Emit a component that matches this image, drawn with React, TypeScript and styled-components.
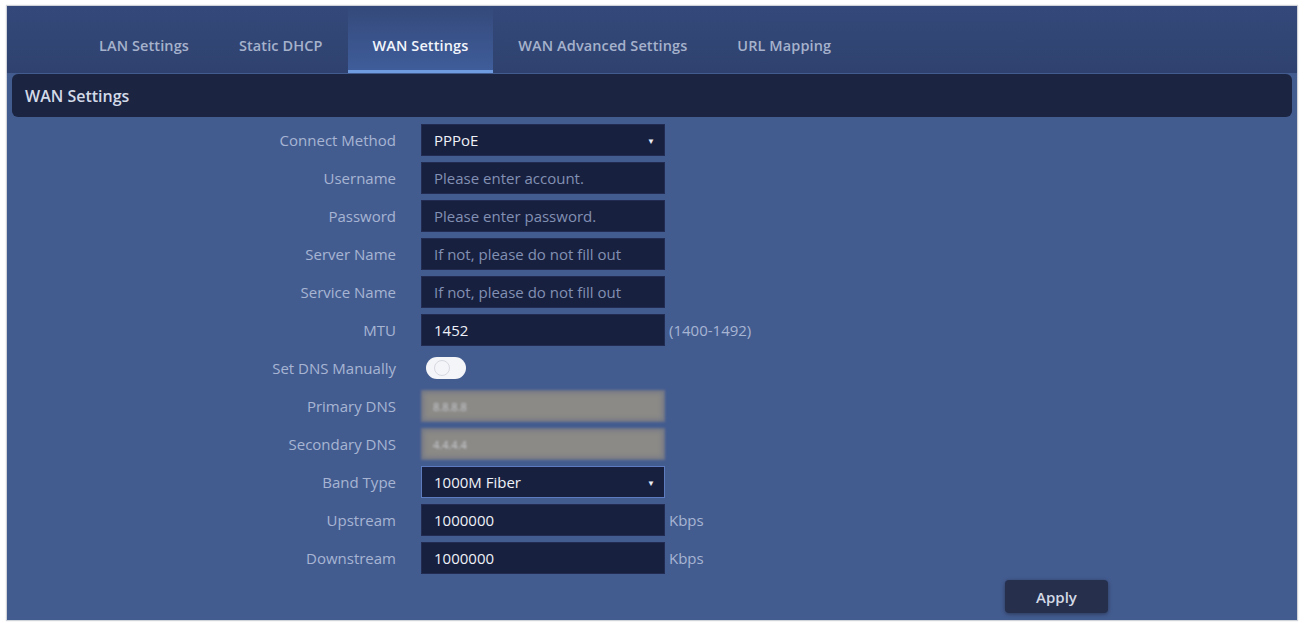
import styled, { createGlobalStyle } from 'styled-components';

const GlobalStyle = createGlobalStyle`
  html, body {
    margin: 0;
    padding: 0;
    background: #ffffff;
  }
  body {
    font-family: "Open Sans", "Noto Sans", sans-serif;
  }
`;

type Field = {
  label: string;
  kind: 'select' | 'input' | 'toggle' | 'disabled';
  value?: string;
  placeholder?: string;
  unit?: string;
  outlined?: boolean;
};

const tabs = ['LAN Settings', 'Static DHCP', 'WAN Settings', 'WAN Advanced Settings', 'URL Mapping'];

const fields: Field[] = [
  { label: 'Connect Method', kind: 'select', value: 'PPPoE' },
  { label: 'Username', kind: 'input', placeholder: 'Please enter account.' },
  { label: 'Password', kind: 'input', placeholder: 'Please enter password.' },
  { label: 'Server Name', kind: 'input', placeholder: 'If not, please do not fill out' },
  { label: 'Service Name', kind: 'input', placeholder: 'If not, please do not fill out' },
  { label: 'MTU', kind: 'input', value: '1452', unit: '(1400-1492)' },
  { label: 'Set DNS Manually', kind: 'toggle' },
  { label: 'Primary DNS', kind: 'disabled', value: '8.8.8.8' },
  { label: 'Secondary DNS', kind: 'disabled', value: '4.4.4.4' },
  { label: 'Band Type', kind: 'select', value: '1000M Fiber', outlined: true },
  { label: 'Upstream', kind: 'input', value: '1000000', unit: 'Kbps' },
  { label: 'Downstream', kind: 'input', value: '1000000', unit: 'Kbps' },
];

const App = () => {
  return (
    <Page>
      <GlobalStyle />
      <Frame>
        <TabBar>
          {tabs.map((t) => (
            <Tab key={t} active={t === 'WAN Settings'}>
              {t}
            </Tab>
          ))}
        </TabBar>
        <Header>WAN Settings</Header>
        <Form>
          {fields.map((f) => (
            <Row key={f.label}>
              <Label>{f.label}</Label>
              {f.kind === 'select' && (
                <Box outlined={f.outlined}>
                  <Value>{f.value}</Value>
                  <Caret>▼</Caret>
                </Box>
              )}
              {f.kind === 'input' && (
                <Box>
                  {f.value ? <Value>{f.value}</Value> : <Placeholder>{f.placeholder}</Placeholder>}
                </Box>
              )}
              {f.kind === 'toggle' && (
                <ToggleCell>
                  <Toggle>
                    <Knob />
                  </Toggle>
                </ToggleCell>
              )}
              {f.kind === 'disabled' && (
                <DisabledBox>
                  <DisabledText>{f.value}</DisabledText>
                </DisabledBox>
              )}
              <Unit>{f.unit}</Unit>
            </Row>
          ))}
        </Form>
        <Footer>
          <ApplyButton>Apply</ApplyButton>
        </Footer>
      </Frame>
    </Page>
  );
};

export default App;

const Page = styled.div`
  width: 1304px;
  height: 623px;
  padding: 6px 7px 3px 7px;
  box-sizing: border-box;
  background: #ffffff;
`;

const Frame = styled.div`
  height: 100%;
  display: flex;
  flex-direction: column;
  background: #435c90;
  box-shadow: 0 0 1px 1px rgba(120, 130, 150, 0.35);
`;

const TabBar = styled.div`
  display: flex;
  align-items: stretch;
  height: 67px;
  padding-left: 67px;
  background: linear-gradient(#34497a, #2f426f);
`;

const Tab = styled.div<{ active?: boolean }>`
  display: flex;
  align-items: center;
  justify-content: center;
  padding: 14px 25px 0 25px;
  font-size: 14.5px;
  font-weight: 600;
  letter-spacing: 0.1px;
  color: ${(p) => (p.active ? '#f2f5fb' : '#a6b2cc')};
  background: ${(p) => (p.active ? 'linear-gradient(#34497a, #3f5d9a)' : 'transparent')};
  border-bottom: 3px solid ${(p) => (p.active ? '#6f9be0' : 'transparent')};
`;

const Header = styled.div`
  margin: 1px 5px 0 5px;
  height: 43px;
  display: flex;
  align-items: center;
  padding-left: 13px;
  border-radius: 6px;
  background: #1b2441;
  color: #d3dae8;
  font-size: 16px;
  font-weight: 600;
`;

const Form = styled.div`
  display: flex;
  flex-direction: column;
  gap: 6px;
  padding-top: 7px;
`;

const Row = styled.div`
  display: grid;
  grid-template-columns: 389px 244px auto;
  column-gap: 25px;
  align-items: center;
  height: 32px;
`;

const Label = styled.div`
  text-align: right;
  font-size: 15px;
  color: #a7b5d3;
`;

const Box = styled.div<{ outlined?: boolean }>`
  height: 32px;
  box-sizing: border-box;
  display: flex;
  align-items: center;
  justify-content: space-between;
  padding: 0 9px 0 12px;
  background: #18203f;
  border: 1px solid ${(p) => (p.outlined ? '#5d7cc0' : '#222c52')};
`;

const Value = styled.span`
  font-size: 15px;
  color: #eef1f8;
`;

const Placeholder = styled.span`
  font-size: 15px;
  color: #8290b3;
`;

const Caret = styled.span`
  font-size: 8px;
  color: #e8ecf5;
`;

const ToggleCell = styled.div`
  display: flex;
  align-items: center;
  padding-left: 5px;
`;

const Toggle = styled.div`
  width: 40px;
  height: 22px;
  border-radius: 11px;
  background: #f4f5f8;
  display: flex;
  align-items: center;
  padding-left: 8px;
  box-sizing: border-box;
  filter: blur(0.6px);
`;

const Knob = styled.div`
  width: 14px;
  height: 14px;
  border-radius: 50%;
  border: 1px solid #d6d9e2;
`;

const DisabledBox = styled.div`
  height: 32px;
  display: flex;
  align-items: center;
  padding-left: 12px;
  background: #8b8a87;
  box-shadow: inset 0 0 5px 2px #6d7385;
  filter: blur(1.2px);
`;

const DisabledText = styled.span`
  font-size: 11px;
  color: #c9cad0;
`;

const Unit = styled.div`
  font-size: 15px;
  color: #a7b5d3;
  margin-left: -21px;
`;

const Footer = styled.div`
  display: flex;
  justify-content: flex-end;
  padding: 6px 189px 0 0;
`;

const ApplyButton = styled.button`
  width: 103px;
  height: 33px;
  border: none;
  border-radius: 4px;
  background: #262f4c;
  box-shadow: 0 1px 4px rgba(0, 0, 0, 0.4);
  color: #d3d9e6;
  font-family: "Open Sans", "Noto Sans", sans-serif;
  font-size: 15px;
  font-weight: 600;
`;
